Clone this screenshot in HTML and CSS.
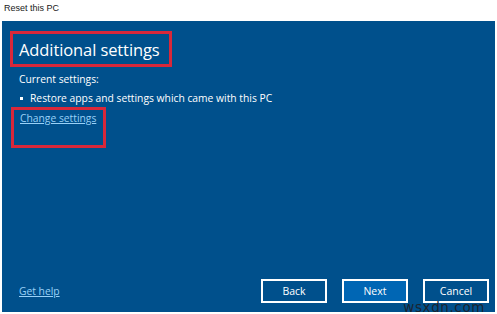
FILE: index.html
```html
<!DOCTYPE html>
<html>
<head>
<meta charset="utf-8">
<link rel="stylesheet" href="styles.css">
</head>
<body>
<div class="window">
  <div class="titlebar">Reset this PC</div>
  <div class="panel">
    <div class="content">
      <div class="hl hl-title"><h1 class="title">Additional settings</h1></div>
      <div class="label">Current settings:</div>
      <div class="bullet"><span class="dot"></span>Restore apps and settings which came with this PC</div>
      <div class="hl hl-link"><a class="link" href="#">Change settings</a></div>
    </div>
    <div class="footer">
      <a class="link help" href="#">Get help</a>
      <div class="buttons">
        <button class="btn">Back</button>
        <button class="btn primary">Next</button>
        <button class="btn">Cancel</button>
      </div>
    </div>
    <div class="watermark">wsxdn.com</div>
  </div>
</div>
</body>
</html>
```
FILE: styles.css
```css
html, body {
  margin: 0;
  padding: 0;
  background: #ffffff;
}
body {
  width: 497px;
  height: 314px;
  overflow: hidden;
  font-family: "Open Sans", "Noto Sans", sans-serif;
}
.window {
  display: flex;
  flex-direction: column;
  height: 314px;
}
.titlebar {
  height: 21px;
  box-sizing: border-box;
  padding: 3px 0 0 4px;
  font-family: "Liberation Sans", Arial, sans-serif;
  font-size: 9px;
  color: #1a1a1a;
}
.panel {
  position: relative;
  margin: 0 2px 0 2px;
  height: 291px;
  background: #00508c;
  color: #ffffff;
  display: flex;
  flex-direction: column;
  justify-content: space-between;
}
.content {
  padding: 10px 0 0 8px;
  display: flex;
  flex-direction: column;
  align-items: flex-start;
}
.hl {
  border: 3px solid #d9283a;
  box-sizing: border-box;
}
.hl-title {
  width: 162px;
  height: 36px;
  padding: 4px 0 0 6px;
}
.title {
  margin: 0;
  font-weight: 400;
  font-size: 16.5px;
  line-height: 24px;
  white-space: nowrap;
  letter-spacing: -0.1px;
}
.label {
  font-size: 10.3px;
  line-height: 14px;
  margin: 5px 0 0 9px;
}
.bullet {
  font-size: 10.3px;
  line-height: 14px;
  margin: 5px 0 0 9px;
  display: flex;
  align-items: center;
  white-space: nowrap;
}
.dot {
  width: 3px;
  height: 3px;
  background: #ffffff;
  margin-right: 7px;
  margin-left: 1px;
}
.hl-link {
  width: 95px;
  height: 41px;
  padding: 1px 0 0 6px;
  margin-top: 2px;
  margin-left: 1px;
  font-size: 10.3px;
  line-height: 14px;
}
.link {
  color: #99d1f7;
  font-size: 10.3px;
  text-decoration: underline;
  line-height: 14px;
}
.footer {
  display: flex;
  justify-content: space-between;
  align-items: flex-end;
  padding: 0 6px 9px 17px;
  font-size: 10.3px;
  line-height: 14px;
}
.help {
  margin-bottom: 5px;
}
.buttons {
  display: flex;
  gap: 15px;
}
.btn {
  width: 66px;
  height: 24px;
  box-sizing: border-box;
  border: 2px solid #ffffff;
  background: transparent;
  color: #ffffff;
  font-family: "Open Sans", "Noto Sans", sans-serif;
  font-size: 10.5px;
  padding: 0;
}
.btn.primary {
  background: #0066b4;
}
.watermark {
  position: absolute;
  right: 10px;
  bottom: -2px;
  font-family: "DejaVu Sans", sans-serif;
  font-size: 13.5px;
  line-height: 14px;
  color: #1b2430;
  letter-spacing: 0.6px;
}
```
